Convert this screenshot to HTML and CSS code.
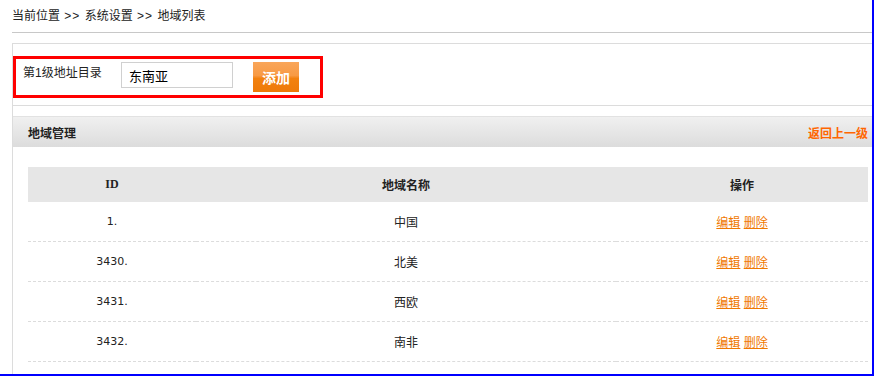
FILE: index.html
```html
<!DOCTYPE html>
<html>
<head>
    <title>地域列表</title>
    <link rel="stylesheet" href="styles.css">
</head>
<body>
<div class="frame">
    <div class="crumb">当前位置 <span class="sep">&gt;&gt;</span> 系统设置 <span class="sep">&gt;&gt;</span> 地域列表</div>
    <div class="main">
        <div class="form-box">
            <div class="form-row">
                <label class="form-label" for="areaName">第1级地址目录</label>
                <input type="text" id="areaName" class="form-input" value="东南亚">
                <button class="btn-add">添加</button>
            </div>
        </div>
        <div class="panel">
            <div class="panel-head">
                <span class="panel-title">地域管理</span>
                <a href="#" class="back-link">返回上一级</a>
            </div>
            <table class="list">
                <tr>
                    <th class="col-id">ID</th>
                    <th class="col-name">地域名称</th>
                    <th class="col-op">操作</th>
                </tr>
                <tr>
                    <td class="num">1.</td>
                    <td>中国</td>
                    <td><a href="#">编辑</a> <a href="#">删除</a></td>
                </tr>
                <tr>
                    <td class="num">3430.</td>
                    <td>北美</td>
                    <td><a href="#">编辑</a> <a href="#">删除</a></td>
                </tr>
                <tr>
                    <td class="num">3431.</td>
                    <td>西欧</td>
                    <td><a href="#">编辑</a> <a href="#">删除</a></td>
                </tr>
                <tr>
                    <td class="num">3432.</td>
                    <td>南非</td>
                    <td><a href="#">编辑</a> <a href="#">删除</a></td>
                </tr>
            </table>
        </div>
    </div>
</div>
</body>
</html>
```

FILE: styles.css
```css
body {
    margin: 0;
    padding: 0;
    background: #fff;
    font-family: "Liberation Sans", "Noto Sans CJK SC", sans-serif;
    font-size: 12px;
    color: #333;
}
.frame {
    width: 874px;
    height: 376px;
    box-sizing: border-box;
    border-right: 2px solid #0000ff;
    border-bottom: 2px solid #0000ff;
    overflow: hidden;
}
.crumb {
    margin-left: 12px;
    height: 32px;
    line-height: 32px;
    border-bottom: 1px solid #c8c8c8;
    color: #222;
}
.sep {
    margin: 0 1px;
    letter-spacing: 1px;
}
.main {
    margin-left: 12px;
    margin-top: 10px;
    border-left: 1px solid #dcdcdc;
    height: 340px;
}
.form-box {
    border-top: 1px solid #dcdcdc;
    border-bottom: 1px solid #dcdcdc;
    padding: 12px 0 7px 0;
}
.form-row {
    width: 310px;
    height: 42px;
    box-sizing: border-box;
    border: 3px solid #ff0000;
    padding: 3px 0 0 7px;
    display: flex;
    align-items: flex-start;
}
.form-label {
    width: 98px;
    margin-top: 4px;
    line-height: 14px;
    color: #222;
}
.form-input {
    width: 112px;
    height: 26px;
    box-sizing: border-box;
    border: 1px solid #d0d0d0;
    padding: 0 0 0 7px;
    font-family: "Noto Sans CJK SC", sans-serif;
    font-size: 13px;
    color: #000;
    outline: none;
}
.btn-add {
    margin-left: 20px;
    width: 46px;
    height: 30px;
    border: none;
    padding: 0;
    background: linear-gradient(to bottom, #f9a65a 0%, #f89a44 45%, #f28110 55%, #ee7a08 100%);
    color: #fff;
    font-family: "Noto Sans CJK SC", sans-serif;
    font-weight: bold;
    font-size: 14px;
    cursor: pointer;
}
.panel {
    margin-top: 10px;
}
.panel-head {
    height: 30px;
    border-top: 1px solid #e2e2e2;
    background: linear-gradient(to bottom, #f0f0f0, #dcdcdc);
    display: flex;
    align-items: center;
    justify-content: space-between;
    padding: 0 4px 0 15px;
}
.panel-title {
    font-weight: bold;
    color: #222;
}
.back-link {
    color: #ff6600;
    font-weight: bold;
    text-decoration: none;
}
.list {
    margin: 20px 0 0 15px;
    width: 840px;
    border-collapse: collapse;
    table-layout: fixed;
}
.list th {
    height: 35px;
    background: #e6e6e6;
    font-family: "Liberation Serif", "Noto Sans CJK SC", serif;
    font-weight: bold;
    font-size: 12px;
    color: #222;
    padding: 0;
}
.col-id {
    width: 168px;
}
.col-name {
    width: 420px;
}
.list td {
    height: 39px;
    text-align: center;
    border-bottom: 1px dashed #dcdcdc;
    padding: 0;
    color: #222;
}
.list td.num {
    font-family: "DejaVu Sans", sans-serif;
    font-size: 11px;
}
.list a {
    color: #f07800;
    text-decoration: underline;
}
```
